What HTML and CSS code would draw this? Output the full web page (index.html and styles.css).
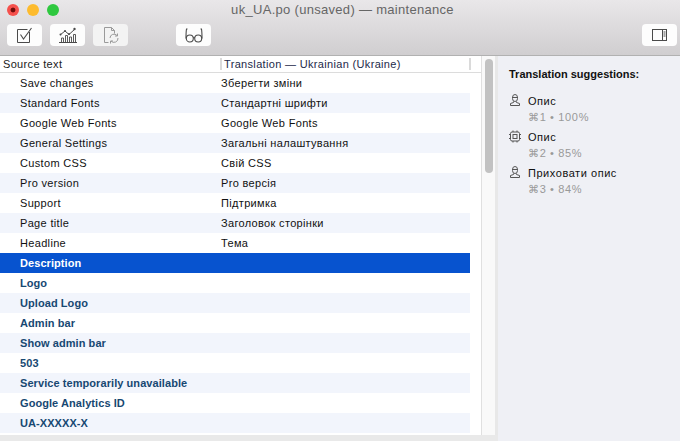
FILE: index.html
```html
<!DOCTYPE html>
<html lang="en">
<head>
<meta charset="utf-8">
<title>uk_UA.po (unsaved) — maintenance</title>
<link rel="stylesheet" href="styles.css">
</head>
<body>
<div class="window">
  <header class="chrome">
    <div class="titlebar">
      <div class="lights">
        <span class="light red"></span>
        <span class="light yellow"></span>
        <span class="light green"></span>
      </div>
      <div class="title">uk_UA.po (unsaved) — maintenance</div>
    </div>
    <div class="toolbar">
      <div class="tools-left">
        <button class="tool"><svg width="17" height="16" viewBox="0 0 17 16" fill="none" stroke="#4a4a4a" stroke-width="1"><path d="M13.500 5v10.500H1.500V2.500h10"/><path d="M4.500 7.500l3 4.500L15.500 1" stroke-width="1.100"/></svg></button>
        <button class="tool"><svg width="18" height="16" viewBox="0 0 18 16" fill="none" stroke="#4a4a4a" stroke-width="1"><path d="M0 15.500h18"/><path d="M2.500 15v-4h2v4M6.500 15V8.500h2V15M10.500 15v-5h2v5M14.500 15V7.500h2V15" stroke-width="0.900"/><path d="M1 8l5-4 4 3.500 6-5.500" stroke-width="1"/><circle cx="1.500" cy="7.500" r="1" fill="#4a4a4a" stroke="none"/><circle cx="6" cy="4" r="1" fill="#4a4a4a" stroke="none"/><circle cx="10" cy="7" r="1" fill="#4a4a4a" stroke="none"/><circle cx="15.500" cy="2" r="1.200" fill="#4a4a4a" stroke="none"/></svg></button>
        <button class="tool dim"><svg width="16" height="17" viewBox="0 0 16 17" fill="none" stroke="#9a9a9a" stroke-width="1"><path d="M5.500 15.500H1.500V0.500h7l3 3v3M8.500 0.500v3h3"/><path d="M7 11a4 4 0 0 1 7-2.500M15 11a4 4 0 0 1-7 3"/><path d="M14.500 6.500v2.500H12M7.500 16.500V14H10"/></svg></button>
      </div>
      <button class="tool glasses"><svg width="18" height="15" viewBox="0 0 18 15" fill="none" stroke="#4a4a4a" stroke-width="1.100"><path d="M2.500 1H1.500C1 4 1 7 1 10.500M15.500 1h1C17 4 17 7 17 10.500"/><circle cx="4.800" cy="10.500" r="3.500"/><circle cx="13.200" cy="10.500" r="3.500"/><path d="M8.300 10q0.700-1 1.400 0"/></svg></button>
      <button class="tool sidebar-toggle"><svg width="15" height="12" viewBox="0 0 15 12" fill="none" stroke="#4a4a4a" stroke-width="1"><rect x="0.500" y="0.500" width="14" height="11"/><path d="M10.500 0.500v11M11.500 3h2M11.500 5h2M11.500 7h2"/></svg></button>
    </div>
  </header>
  <main class="content">
    <section class="list">
      <div class="list-head">
        <div class="col-source">Source text</div>
        <div class="col-trans">Translation — Ukrainian (Ukraine)</div>
      </div>
      <div class="rows">
        <div class="row"><span class="source">Save changes</span><span class="trans">Зберегти зміни</span></div>
        <div class="row"><span class="source">Standard Fonts</span><span class="trans">Стандартні шрифти</span></div>
        <div class="row"><span class="source">Google Web Fonts</span><span class="trans">Google Web Fonts</span></div>
        <div class="row"><span class="source">General Settings</span><span class="trans">Загальні налаштування</span></div>
        <div class="row"><span class="source">Custom CSS</span><span class="trans">Свій CSS</span></div>
        <div class="row"><span class="source">Pro version</span><span class="trans">Pro версія</span></div>
        <div class="row"><span class="source">Support</span><span class="trans">Підтримка</span></div>
        <div class="row"><span class="source">Page title</span><span class="trans">Заголовок сторінки</span></div>
        <div class="row"><span class="source">Headline</span><span class="trans">Тема</span></div>
        <div class="row selected"><span class="source">Description</span><span class="trans"></span></div>
        <div class="row todo"><span class="source">Logo</span><span class="trans"></span></div>
        <div class="row todo"><span class="source">Upload Logo</span><span class="trans"></span></div>
        <div class="row todo"><span class="source">Admin bar</span><span class="trans"></span></div>
        <div class="row todo"><span class="source">Show admin bar</span><span class="trans"></span></div>
        <div class="row todo"><span class="source">503</span><span class="trans"></span></div>
        <div class="row todo"><span class="source">Service temporarily unavailable</span><span class="trans"></span></div>
        <div class="row todo"><span class="source">Google Analytics ID</span><span class="trans"></span></div>
        <div class="row todo"><span class="source">UA-XXXXX-X</span><span class="trans"></span></div>
      </div>
    </section>
    <div class="scroll"><div class="thumb"></div></div>
    <aside class="side">
      <h2 class="side-title">Translation suggestions:</h2>
      <div class="sugg">
        <svg class="sugg-icon" width="12" height="12" viewBox="0 0 12 12" fill="none" stroke="#555" stroke-width="1"><path d="M3.500 3.500a2.500 3 0 0 1 5 0v1a2.500 3 0 0 1-5 0z"/><path d="M3 3.500h6"/><path d="M4.500 7.500v1L1.500 9.500v2h9v-2l-3-1v-1"/></svg>
        <div><div class="sugg-text">Опис</div><div class="sugg-meta">⌘1 • 100%</div></div>
      </div>
      <div class="sugg">
        <svg class="sugg-icon" width="12" height="13" viewBox="0 0 12 13" fill="none" stroke="#555" stroke-width="1"><rect x="1.500" y="2" width="9" height="9" rx="1.500"/><rect x="4" y="4.500" width="4" height="4"/><path d="M0 4.500h1.500M0 8.500h1.500M10.500 4.500H12M10.500 8.500H12M4 0.500v1.500M8 0.500v1.500M4 11v1.500M8 11v1.500"/></svg>
        <div><div class="sugg-text">Опис</div><div class="sugg-meta">⌘2 • 85%</div></div>
      </div>
      <div class="sugg">
        <svg class="sugg-icon" width="12" height="12" viewBox="0 0 12 12" fill="none" stroke="#555" stroke-width="1"><path d="M3.500 3.500a2.500 3 0 0 1 5 0v1a2.500 3 0 0 1-5 0z"/><path d="M3 3.500h6"/><path d="M4.500 7.500v1L1.500 9.500v2h9v-2l-3-1v-1"/></svg>
        <div><div class="sugg-text">Приховати опис</div><div class="sugg-meta">⌘3 • 84%</div></div>
      </div>
    </aside>
  </main>
</div>
</body>
</html>
```
FILE: styles.css
```css
* { box-sizing: border-box; }
html, body { margin: 0; padding: 0; height: 100%; overflow: hidden; }
body { font-family: "Liberation Sans", Arial, sans-serif; font-size: 11px; letter-spacing: 0.33px; color: #111; background: #e9e9e9; }
.window { width: 680px; height: 441px; display: flex; flex-direction: column; }
.chrome { height: 56px; flex: none; background: linear-gradient(#e9e7e9, #d0ced0); border-bottom: 1px solid #b1b1b1; }
.titlebar { height: 18px; display: flex; align-items: center; position: relative; }
.lights { display: flex; gap: 8px; padding-left: 7px; padding-top: 1px; }
.light { width: 12px; height: 12px; border-radius: 50%; display: block; }
.red { background: radial-gradient(circle, #6e0c0a 0 2px, #f5504c 2.800px); }
.yellow { background: #fdbb2e; }
.green { background: #2fc83f; }
.title { position: absolute; left: 0; right: 0; top: 2px; text-align: center; font-size: 13px; letter-spacing: 0.3px; line-height: 16px; color: #666; padding-left: 5px; }
.toolbar { display: flex; padding: 6px 3px 0 7px; align-items: flex-start; }
.tools-left { display: flex; gap: 8px; }
.tool { width: 35px; height: 22px; padding: 0; border: 0; border-radius: 4px; background: #fdfdfd; display: flex; align-items: center; justify-content: center; }
.tool.dim { background: #f3f3f3; }
.glasses { margin-left: 48px; }
.sidebar-toggle { margin-left: auto; }
.content { flex: 1; display: flex; min-height: 0; }
.list { width: 481px; flex: none; }
.list-head { height: 17px; display: flex; background: #fff; border-bottom: 1px solid #dcdcdc; line-height: 16px; color: #1a1a1a; }
.col-source { width: 222px; padding-left: 3px; border-right: 2px solid #dadada; margin: 2px 0; line-height: 12px; }
.col-trans { width: 249px; padding-left: 2px; border-right: 2px solid #dadada; margin: 2px 0; line-height: 12px; color: #1d2a4a; }
.rows { background: #fff; height: 362px; }
.row { height: 20px; width: 470px; display: flex; line-height: 20px; }
.row:nth-child(even) { background: #f2f5fc; }
.source { width: 221px; padding-left: 20px; }
.trans { flex: 1; }
.todo { font-weight: bold; letter-spacing: 0.07px; color: #174872; }
.row.selected { background: #0753cf; color: #fff; font-weight: bold; letter-spacing: 0.07px; }
.scroll { width: 17px; flex: none; background: #f9f9f9; border-left: 1px solid #e0e0e0; border-right: 3px solid #e8e8e8; padding: 3px 0 0 3px; height: 379px; }
.thumb { width: 8px; height: 114px; border-radius: 4px; background: #c2c2c2; }
.side { flex: 1; background: #eff0f5; padding: 11px 0 0 11px; }
.side-title { margin: 0 0 12px; font-size: 11px; letter-spacing: 0; line-height: 14px; font-weight: bold; color: #111; }
.sugg { display: flex; gap: 7px; height: 36px; letter-spacing: 0.55px; }
.sugg-icon { margin-top: 1px; margin-left: 0; flex: none; }
.sugg-text { line-height: 16px; color: #111; }
.sugg-meta { line-height: 14px; color: #999; margin-top: 1px; letter-spacing: 0.65px; }
```
